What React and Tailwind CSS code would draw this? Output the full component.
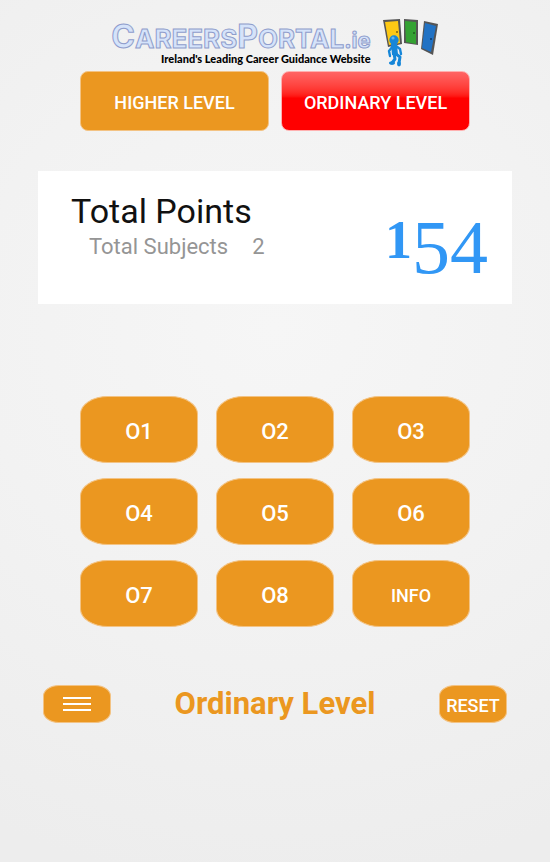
const gradeKeys = ["O1", "O2", "O3", "O4", "O5", "O6", "O7", "O8"];

const orange =
  "border border-[#f3c384] bg-[#eb9720] text-white font-medium";

function Doors() {
  return (
    <svg className="h-[50px] w-[56px]" viewBox="0 0 56 50" aria-hidden="true">
      <path d="M0 2 17 1 19 26 5 29Z" fill="#555" />
      <path d="M2 4 15 3 17 25 6 27Z" fill="#fdc915" />
      <circle cx="14" cy="14" r="1" fill="#7a6210" />
      <path d="M21 1 35 2 35 27 21 25Z" fill="#555" />
      <path d="M22 3 33 4 33 26 23 24Z" fill="#34a233" />
      <circle cx="31" cy="15" r="1" fill="#1c5c1c" />
      <path d="M41 3 55 6 50 37 38 31Z" fill="#555" />
      <path d="M42 5 53 8 48 34 39 30Z" fill="#2172c4" />
      <circle cx="48" cy="21" r="1" fill="#0c3866" />
      <circle cx="11" cy="22" r="4.7" fill="#1686d8" />
      <path
        d="M10 28 6 33 7 38M13 28 17 31 18 36"
        fill="none"
        stroke="#1686d8"
        strokeWidth="2.4"
        strokeLinecap="round"
        strokeLinejoin="round"
      />
      <path d="M8 26H14L15 37H9Z" fill="#1686d8" />
      <path
        d="M11 36 12 41 9 45M13 36 17 39 16 45"
        fill="none"
        stroke="#1686d8"
        strokeWidth="3"
        strokeLinecap="round"
        strokeLinejoin="round"
      />
      <ellipse cx="9" cy="45" rx="3" ry="1.8" fill="#1686d8" />
      <ellipse cx="16" cy="46" rx="2" ry="2.4" fill="#1686d8" />
      <circle cx="10" cy="20" r="1.6" fill="#5fb4ee" />
    </svg>
  );
}

function Logo() {
  return (
    <header className="flex h-[50px] items-start justify-center gap-3">
      <div className="flex flex-col items-end">
        <div className="h-[35px] font-['Inter',sans-serif] text-[26px] leading-[38px] font-bold whitespace-nowrap text-[#d5e3fa] [-webkit-text-stroke:1px_#8f9dcc]">
          <span className="text-[32px]">C</span>AREERS
          <span className="text-[32px]">P</span>ORTAL
          <span className="text-[22px]">.ie</span>
        </div>
        <p className="font-['Lato',sans-serif] text-[11px] leading-3 font-black whitespace-nowrap text-black">
          Ireland&apos;s Leading Career Guidance Website
        </p>
      </div>
      <Doors />
    </header>
  );
}

export default function App() {
  return (
    <main className="min-h-screen bg-[radial-gradient(ellipse_110%_65%_at_50%_38%,#f6f6f6,#f2f2f2_50%,#ededed)] pt-[18px] pb-8 font-['Roboto',sans-serif]">
      <Logo />

      <div className="mt-[3px] grid grid-cols-2 gap-3 px-20">
        <button
          type="button"
          className={`${orange} h-[60px] rounded-lg pt-1 text-lg`}
        >
          HIGHER LEVEL
        </button>
        <button
          type="button"
          aria-pressed="true"
          className="h-[60px] rounded-lg border border-[#ffb0b0] bg-linear-to-b from-[#ff6464] to-[#ff0000] to-45% pt-1 text-lg font-medium text-white"
        >
          ORDINARY LEVEL
        </button>
      </div>

      <section className="mx-[38px] mt-10 flex h-[133px] justify-between bg-white pr-6 pl-[33px]">
        <div className="pt-5">
          <h1 className="text-[34px] leading-10 text-[#111]">Total Points</h1>
          <p className="flex gap-6 pl-[18px] text-[22px] leading-8 text-[#959595]">
            <span>Total Subjects</span>
            <span>2</span>
          </p>
        </div>
        <output className="flex items-start pt-[46px] font-['Liberation_Serif',serif] text-[#3197f5]">
          <span className="text-[54px] leading-[46px] font-bold">1</span>
          <span className="text-[76px] leading-[60px]">54</span>
        </output>
      </section>

      <div className="mt-[92px] grid grid-cols-3 gap-x-[18px] gap-y-[15px] px-20">
        {gradeKeys.map((key) => (
          <button
            key={key}
            type="button"
            className={`${orange} h-[67px] rounded-[28px/18px] pt-1 text-[22px]`}
          >
            {key}
          </button>
        ))}
        <button
          type="button"
          className={`${orange} h-[67px] rounded-[28px/18px] pt-1 text-lg`}
        >
          INFO
        </button>
      </div>

      <footer className="mt-[58px] flex items-center justify-between px-[43px]">
        <button
          type="button"
          aria-label="Menu"
          className={`${orange} flex h-[38px] w-[68px] flex-col items-center justify-center gap-1 rounded-[16px/11px]`}
        >
          <span className="h-0.5 w-7 bg-white" />
          <span className="h-0.5 w-7 bg-white" />
          <span className="h-0.5 w-7 bg-white" />
        </button>
        <h2 className="text-[31px] leading-9 font-bold text-[#eb9720]">
          Ordinary Level
        </h2>
        <button
          type="button"
          className={`${orange} h-[38px] w-[68px] rounded-[16px/11px] pt-1 text-lg`}
        >
          RESET
        </button>
      </footer>
    </main>
  );
}
